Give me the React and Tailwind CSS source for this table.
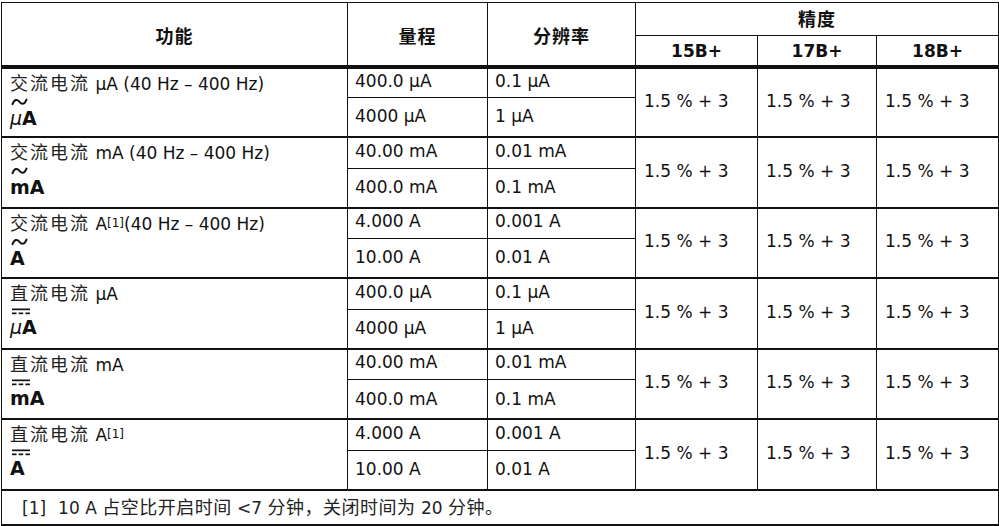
import React from "react";

const LATIN = '"DejaVu Sans", "Noto Sans CJK SC", sans-serif';
const CJK = '"Noto Sans CJK SC", sans-serif';

function Tilde() {
  return (
    <svg width="17" height="8" viewBox="0 0 17 8" className="ml-[1px] block">
      <path d="M1.5 6.2 C3.5 1.2 6 1 8.5 3.8 C11 6.6 13.5 6.6 15.5 1.6" fill="none" stroke="#111" strokeWidth="2" strokeLinecap="round" />
    </svg>
  );
}

function DcMark() {
  return (
    <svg width="19" height="7" viewBox="0 0 19 7" className="ml-[2px] block">
      <rect x="0" y="0.5" width="18" height="1.7" fill="#111" />
      <rect x="0" y="4.5" width="4.5" height="1.7" fill="#111" />
      <rect x="6.7" y="4.5" width="4.5" height="1.7" fill="#111" />
      <rect x="13.4" y="4.5" width="4.5" height="1.7" fill="#111" />
    </svg>
  );
}

function Cn({ children, t = "tracking-[2px]" }) {
  return (
    <span className={`text-[18px] ${t} text-[#222]`} style={{ fontFamily: CJK }}>
      {children}
    </span>
  );
}

function Sup() {
  return <sup className="text-[12px] relative -top-[3px]">[1]</sup>;
}

const groups = [
  {
    title: (<><Cn>交流电流</Cn> µA (40 Hz – 400 Hz)</>),
    mark: "ac",
    sym: (<><span className="italic font-normal">µ</span><span className="font-bold">A</span></>),
    ranges: ["400.0 µA", "4000 µA"],
    res: ["0.1 µA", "1 µA"],
  },
  {
    title: (<><Cn>交流电流</Cn> mA (40 Hz – 400 Hz)</>),
    mark: "ac",
    sym: <span className="font-bold">mA</span>,
    ranges: ["40.00 mA", "400.0 mA"],
    res: ["0.01 mA", "0.1 mA"],
  },
  {
    title: (<><Cn>交流电流</Cn> A<Sup />(40 Hz – 400 Hz)</>),
    mark: "ac",
    sym: <span className="font-bold">A</span>,
    ranges: ["4.000 A", "10.00 A"],
    res: ["0.001 A", "0.01 A"],
  },
  {
    title: (<><Cn>直流电流</Cn> µA</>),
    mark: "dc",
    sym: (<><span className="italic font-normal">µ</span><span className="font-bold">A</span></>),
    ranges: ["400.0 µA", "4000 µA"],
    res: ["0.1 µA", "1 µA"],
  },
  {
    title: (<><Cn>直流电流</Cn> mA</>),
    mark: "dc",
    sym: <span className="font-bold">mA</span>,
    ranges: ["40.00 mA", "400.0 mA"],
    res: ["0.01 mA", "0.1 mA"],
  },
  {
    title: (<><Cn>直流电流</Cn> A<Sup /></>),
    mark: "dc",
    sym: <span className="font-bold">A</span>,
    ranges: ["4.000 A", "10.00 A"],
    res: ["0.001 A", "0.01 A"],
  },
];

function HeadCn({ children }) {
  return (
    <span className="text-[18px] tracking-[1px]" style={{ fontFamily: CJK }}>{children}</span>
  );
}

export default function App() {
  return (
    <div className="w-[999px] h-[526px] bg-white text-[#111] overflow-hidden pt-[2px] pl-[1px]" style={{ fontFamily: LATIN }}>
      <table className="border-collapse table-fixed w-[997px] text-[17px] border-[1.5px] border-[#111]">
        <colgroup>
          <col className="w-[346px]" />
          <col className="w-[140px]" />
          <col className="w-[148px]" />
          <col className="w-[122px]" />
          <col className="w-[119px]" />
          <col className="w-[122px]" />
        </colgroup>
        <thead>
          <tr className="h-[33px]">
            <th rowSpan={2} className="border border-[#111] border-b-[4px] font-bold text-center align-middle pt-[4px]"><HeadCn>功能</HeadCn></th>
            <th rowSpan={2} className="border border-[#111] border-b-[4px] font-bold text-center align-middle pt-[4px]"><HeadCn>量程</HeadCn></th>
            <th rowSpan={2} className="border border-[#111] border-b-[4px] font-bold text-center align-middle pt-[4px]"><HeadCn>分辨率</HeadCn></th>
            <th colSpan={3} className="border border-[#111] font-bold text-center align-middle"><HeadCn>精度</HeadCn></th>
          </tr>
          <tr className="h-[31px]">
            {["15B+", "17B+", "18B+"].map((m) => (
              <th key={m} className="border border-[#111] border-b-[4px] font-bold text-center align-middle text-[17px] pt-[2px]">{m}</th>
            ))}
          </tr>
        </thead>
        <tbody>
          {groups.map((g, i) => (
            <React.Fragment key={i}>
              <tr className="h-[31px]">
                <td rowSpan={2} className={`border-x border-[#111] ${i === 0 ? "" : "border-t-[2px]"} align-top p-0`}>
                  <div className="flex flex-col pl-[8px] pt-[1px]">
                    <div className="h-[24px] leading-[24px] whitespace-nowrap">{g.title}</div>
                    <div className="mt-[4px]">{g.mark === "ac" ? <Tilde /> : <DcMark />}</div>
                    <div className="mt-[3px] h-[18px] leading-[18px] text-[19px] whitespace-nowrap">{g.sym}</div>
                  </div>
                </td>
                <td className={`border border-[#111] ${i === 0 ? "" : "border-t-[2px]"} pl-[7px] pb-[3px] align-middle whitespace-nowrap`}>{g.ranges[0]}</td>
                <td className={`border border-[#111] ${i === 0 ? "" : "border-t-[2px]"} pl-[7px] pb-[3px] align-middle whitespace-nowrap`}>{g.res[0]}</td>
                {[0, 1, 2].map((k) => (
                  <td key={k} rowSpan={2} className={`border border-[#111] ${i === 0 ? "" : "border-t-[2px]"} pl-[8px] pb-[2px] align-middle whitespace-nowrap`}>1.5 % + 3</td>
                ))}
              </tr>
              <tr className="h-[39.6px]">
                <td className="border border-[#111] pl-[7px] align-middle whitespace-nowrap">{g.ranges[1]}</td>
                <td className="border border-[#111] pl-[7px] align-middle whitespace-nowrap">{g.res[1]}</td>
              </tr>
            </React.Fragment>
          ))}
          <tr className="h-[35px]">
            <td colSpan={6} className="border border-[#111] border-t-[2px] border-b-[2px] pl-[20px] align-middle whitespace-nowrap text-[#222]">
              <span className="mr-[12px]">[1]</span>10 A <Cn t="tracking-[0.5px]">占空比开启时间</Cn> &lt;7 <Cn t="tracking-[0.5px]">分钟，关闭时间为</Cn> 20 <Cn t="tracking-[0.5px]">分钟。</Cn>
            </td>
          </tr>
        </tbody>
      </table>
    </div>
  );
}
